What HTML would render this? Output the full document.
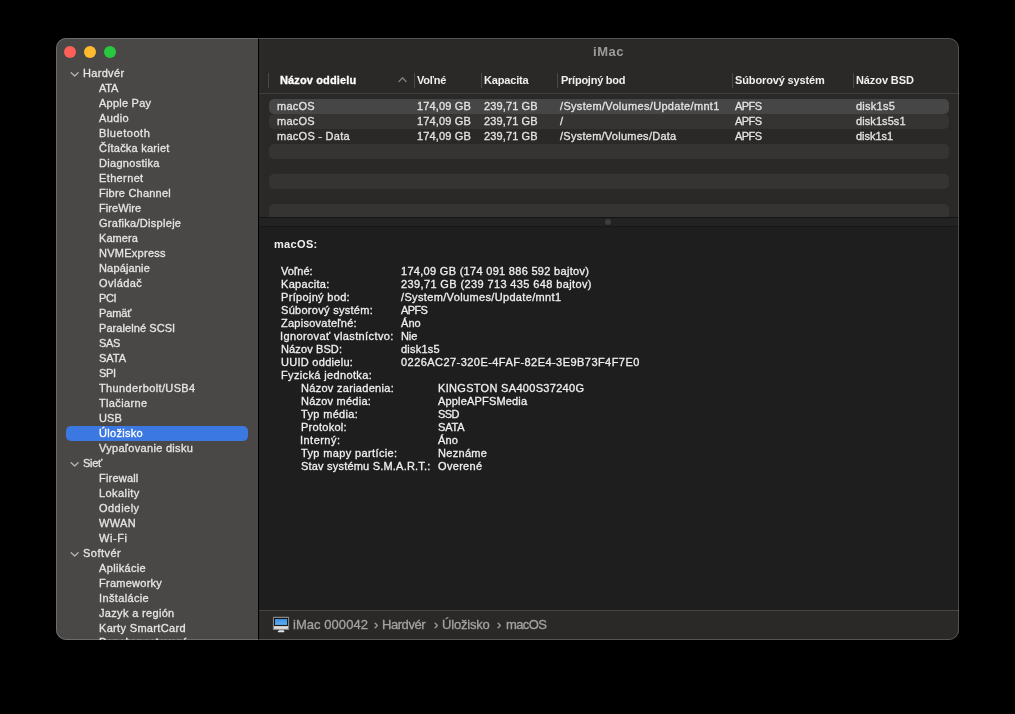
<!DOCTYPE html>
<html><head><meta charset="utf-8"><title>iMac</title>
<style>
html,body{margin:0;padding:0;background:#000;}
body{width:1015px;height:714px;overflow:hidden;position:relative;font-family:"Liberation Sans",sans-serif;}
#win{position:absolute;left:56px;top:38px;width:903px;height:602px;border-radius:10px;overflow:hidden;background:#2a2928;}
#ring{position:absolute;left:56px;top:38px;width:903px;height:602px;border-radius:10px;box-sizing:border-box;border:1px solid rgba(255,255,255,0.2);pointer-events:none;}
#side{position:absolute;left:0;top:0;width:202px;height:602px;background:#4a4847;}
#sepv{position:absolute;left:202px;top:0;width:1px;height:602px;background:#000;}
.tl{position:absolute;top:8px;width:12px;height:12px;border-radius:50%;}
#txt{position:absolute;left:0;top:0;width:903px;height:602px;will-change:transform;}
.t{position:absolute;white-space:nowrap;-webkit-text-stroke:0 currentColor;}
.sel{position:absolute;left:10px;width:182px;height:15px;border-radius:5px;background:#3b78e2;}
.vsep{position:absolute;top:35px;width:1px;height:15px;background:#4a4948;}
#hline{position:absolute;left:203px;right:0;top:55px;height:1px;background:#403f3e;}
.rb{position:absolute;left:213px;width:680px;height:15px;border-radius:5px;}
.rsel{background:#464646;}
.ralt{background:#353432;}
#split{position:absolute;left:203px;right:0;top:179px;height:10px;background:#222222;border-top:1px solid #151515;border-bottom:1px solid #171717;box-sizing:border-box;}
#dot{position:absolute;left:549px;top:181px;width:6px;height:6px;border-radius:50%;background:#3c3c3c;}
#detail{position:absolute;left:203px;right:0;top:189px;height:384px;background:#1e1e1e;}
#pline{position:absolute;left:203px;right:0;top:572px;height:1px;background:#474645;}
#pbar{position:absolute;left:203px;right:0;top:573px;height:29px;background:#2a2928;}
</style></head><body>
<div id="win">
 <div id="side">
  <div class="tl" style="left:8px;background:#fe5f57"></div>
  <div class="tl" style="left:28px;background:#febc2e"></div>
  <div class="tl" style="left:48px;background:#28c840"></div>
 </div>
 <div id="sepv"></div>
 <div class="vsep" style="left:212px"></div><div class="vsep" style="left:358px"></div><div class="vsep" style="left:425px"></div><div class="vsep" style="left:501px"></div><div class="vsep" style="left:676px"></div><div class="vsep" style="left:797px"></div>
 <svg style="position:absolute;left:342px;top:38px" width="9" height="7" viewBox="0 0 9 7"><path d="M1 5.5 L4.5 1.8 L8 5.5" fill="none" stroke="#807f7e" stroke-width="1.3" stroke-linecap="round" stroke-linejoin="round"/></svg>
 <div id="hline"></div>
 <div class="rb rsel" style="top:61px"></div><div class="rb ralt" style="top:76px"></div><div class="rb ralt" style="top:106px"></div><div class="rb ralt" style="top:136px"></div><div class="rb ralt" style="top:166px"></div>
 <div id="split"></div><div id="dot"></div>
 <div id="detail"></div>
 <div id="pline"></div>
 <div id="pbar"></div>
 <svg style="position:absolute;left:216px;top:578px" width="18" height="18" viewBox="0 0 18 18">
  <defs><linearGradient id="scr" x1="0" y1="0" x2="0" y2="1"><stop offset="0" stop-color="#3f8ed8"/><stop offset="1" stop-color="#5cb2f6"/></linearGradient></defs>
  <rect x="0.9" y="0.8" width="16.2" height="13.2" rx="0.6" fill="#878685"/>
  <rect x="2" y="2" width="14" height="7.8" fill="#070605"/>
  <rect x="2.9" y="2.9" width="12.3" height="6" fill="url(#scr)"/>
  <rect x="2" y="10.2" width="14" height="2.7" fill="#dcdcdc"/>
  <path d="M7.3 13.6 h4.1 l0.7 1.4 h-5.5 z" fill="#a8a8a8"/>
  <rect x="5.8" y="14.8" width="6.6" height="1.5" rx="0.7" fill="#e2e2e2"/>
 </svg>
 <svg style="position:absolute;left:14px;top:33px" width="10" height="7" viewBox="0 0 10 7"><path d="M1.2 1.7 L4.65 5.0 L8.1 1.7" fill="none" stroke="#b3b2b1" stroke-width="1.4" stroke-linecap="round" stroke-linejoin="round"/></svg><div class="sel" style="top:388px"></div><svg style="position:absolute;left:14px;top:423px" width="10" height="7" viewBox="0 0 10 7"><path d="M1.2 1.7 L4.65 5.0 L8.1 1.7" fill="none" stroke="#b3b2b1" stroke-width="1.4" stroke-linecap="round" stroke-linejoin="round"/></svg><svg style="position:absolute;left:14px;top:513px" width="10" height="7" viewBox="0 0 10 7"><path d="M1.2 1.7 L4.65 5.0 L8.1 1.7" fill="none" stroke="#b3b2b1" stroke-width="1.4" stroke-linecap="round" stroke-linejoin="round"/></svg>
 <div id="txt"><div class="t" style="-webkit-text-stroke-width:0.3px;left:27px;top:28px;height:15px;line-height:15px;font-size:11px;font-weight:normal;color:#e6e5e4;letter-spacing:0.32px;">Hardvér</div>
<div class="t" style="-webkit-text-stroke-width:0.3px;left:43px;top:43px;height:15px;line-height:15px;font-size:11px;font-weight:normal;color:#e6e5e4;letter-spacing:-0.20px;">ATA</div>
<div class="t" style="-webkit-text-stroke-width:0.3px;left:43px;top:58px;height:15px;line-height:15px;font-size:11px;font-weight:normal;color:#e6e5e4;letter-spacing:0.23px;">Apple Pay</div>
<div class="t" style="-webkit-text-stroke-width:0.3px;left:43px;top:73px;height:15px;line-height:15px;font-size:11px;font-weight:normal;color:#e6e5e4;letter-spacing:0.38px;">Audio</div>
<div class="t" style="-webkit-text-stroke-width:0.3px;left:43px;top:88px;height:15px;line-height:15px;font-size:11px;font-weight:normal;color:#e6e5e4;letter-spacing:0.54px;">Bluetooth</div>
<div class="t" style="-webkit-text-stroke-width:0.3px;left:43px;top:103px;height:15px;line-height:15px;font-size:11px;font-weight:normal;color:#e6e5e4;letter-spacing:0.24px;">Čítačka kariet</div>
<div class="t" style="-webkit-text-stroke-width:0.3px;left:43px;top:118px;height:15px;line-height:15px;font-size:11px;font-weight:normal;color:#e6e5e4;letter-spacing:0.30px;">Diagnostika</div>
<div class="t" style="-webkit-text-stroke-width:0.3px;left:43px;top:133px;height:15px;line-height:15px;font-size:11px;font-weight:normal;color:#e6e5e4;letter-spacing:0.37px;">Ethernet</div>
<div class="t" style="-webkit-text-stroke-width:0.3px;left:43px;top:148px;height:15px;line-height:15px;font-size:11px;font-weight:normal;color:#e6e5e4;letter-spacing:0.22px;">Fibre Channel</div>
<div class="t" style="-webkit-text-stroke-width:0.3px;left:43px;top:163px;height:15px;line-height:15px;font-size:11px;font-weight:normal;color:#e6e5e4;letter-spacing:0.07px;">FireWire</div>
<div class="t" style="-webkit-text-stroke-width:0.3px;left:43px;top:178px;height:15px;line-height:15px;font-size:11px;font-weight:normal;color:#e6e5e4;letter-spacing:0.29px;">Grafika/Displeje</div>
<div class="t" style="-webkit-text-stroke-width:0.3px;left:43px;top:193px;height:15px;line-height:15px;font-size:11px;font-weight:normal;color:#e6e5e4;letter-spacing:0.08px;">Kamera</div>
<div class="t" style="-webkit-text-stroke-width:0.3px;left:43px;top:208px;height:15px;line-height:15px;font-size:11px;font-weight:normal;color:#e6e5e4;letter-spacing:0.26px;">NVMExpress</div>
<div class="t" style="-webkit-text-stroke-width:0.3px;left:43px;top:223px;height:15px;line-height:15px;font-size:11px;font-weight:normal;color:#e6e5e4;letter-spacing:0.16px;">Napájanie</div>
<div class="t" style="-webkit-text-stroke-width:0.3px;left:43px;top:238px;height:15px;line-height:15px;font-size:11px;font-weight:normal;color:#e6e5e4;letter-spacing:0.42px;">Ovládač</div>
<div class="t" style="-webkit-text-stroke-width:0.3px;left:43px;top:253px;height:15px;line-height:15px;font-size:11px;font-weight:normal;color:#e6e5e4;letter-spacing:-0.35px;">PCI</div>
<div class="t" style="-webkit-text-stroke-width:0.3px;left:43px;top:268px;height:15px;line-height:15px;font-size:11px;font-weight:normal;color:#e6e5e4;letter-spacing:-0.15px;">Pamäť</div>
<div class="t" style="-webkit-text-stroke-width:0.3px;left:43px;top:283px;height:15px;line-height:15px;font-size:11px;font-weight:normal;color:#e6e5e4;letter-spacing:0.07px;">Paralelné SCSI</div>
<div class="t" style="-webkit-text-stroke-width:0.3px;left:43px;top:298px;height:15px;line-height:15px;font-size:11px;font-weight:normal;color:#e6e5e4;letter-spacing:-0.35px;">SAS</div>
<div class="t" style="-webkit-text-stroke-width:0.3px;left:43px;top:313px;height:15px;line-height:15px;font-size:11px;font-weight:normal;color:#e6e5e4;letter-spacing:0.00px;">SATA</div>
<div class="t" style="-webkit-text-stroke-width:0.3px;left:43px;top:328px;height:15px;line-height:15px;font-size:11px;font-weight:normal;color:#e6e5e4;letter-spacing:-0.35px;">SPI</div>
<div class="t" style="-webkit-text-stroke-width:0.3px;left:43px;top:343px;height:15px;line-height:15px;font-size:11px;font-weight:normal;color:#e6e5e4;letter-spacing:0.38px;">Thunderbolt/USB4</div>
<div class="t" style="-webkit-text-stroke-width:0.3px;left:43px;top:358px;height:15px;line-height:15px;font-size:11px;font-weight:normal;color:#e6e5e4;letter-spacing:0.35px;">Tlačiarne</div>
<div class="t" style="-webkit-text-stroke-width:0.3px;left:43px;top:373px;height:15px;line-height:15px;font-size:11px;font-weight:normal;color:#e6e5e4;letter-spacing:0.05px;">USB</div>
<div class="t" style="-webkit-text-stroke-width:0.3px;left:43px;top:388px;height:15px;line-height:15px;font-size:11px;font-weight:normal;color:#ffffff;letter-spacing:0.31px;">Úložisko</div>
<div class="t" style="-webkit-text-stroke-width:0.3px;left:43px;top:403px;height:15px;line-height:15px;font-size:11px;font-weight:normal;color:#e6e5e4;letter-spacing:0.30px;">Vypaľovanie disku</div>
<div class="t" style="-webkit-text-stroke-width:0.3px;left:27px;top:418px;height:15px;line-height:15px;font-size:11px;font-weight:normal;color:#e6e5e4;letter-spacing:-0.30px;">Sieť</div>
<div class="t" style="-webkit-text-stroke-width:0.3px;left:43px;top:433px;height:15px;line-height:15px;font-size:11px;font-weight:normal;color:#e6e5e4;letter-spacing:0.20px;">Firewall</div>
<div class="t" style="-webkit-text-stroke-width:0.3px;left:43px;top:448px;height:15px;line-height:15px;font-size:11px;font-weight:normal;color:#e6e5e4;letter-spacing:0.43px;">Lokality</div>
<div class="t" style="-webkit-text-stroke-width:0.3px;left:43px;top:463px;height:15px;line-height:15px;font-size:11px;font-weight:normal;color:#e6e5e4;letter-spacing:0.47px;">Oddiely</div>
<div class="t" style="-webkit-text-stroke-width:0.3px;left:43px;top:478px;height:15px;line-height:15px;font-size:11px;font-weight:normal;color:#e6e5e4;letter-spacing:0.33px;">WWAN</div>
<div class="t" style="-webkit-text-stroke-width:0.3px;left:43px;top:493px;height:15px;line-height:15px;font-size:11px;font-weight:normal;color:#e6e5e4;letter-spacing:0.60px;">Wi-Fi</div>
<div class="t" style="-webkit-text-stroke-width:0.3px;left:27px;top:508px;height:15px;line-height:15px;font-size:11px;font-weight:normal;color:#e6e5e4;letter-spacing:0.48px;">Softvér</div>
<div class="t" style="-webkit-text-stroke-width:0.3px;left:43px;top:523px;height:15px;line-height:15px;font-size:11px;font-weight:normal;color:#e6e5e4;letter-spacing:0.34px;">Aplikácie</div>
<div class="t" style="-webkit-text-stroke-width:0.3px;left:43px;top:538px;height:15px;line-height:15px;font-size:11px;font-weight:normal;color:#e6e5e4;letter-spacing:0.26px;">Frameworky</div>
<div class="t" style="-webkit-text-stroke-width:0.3px;left:43px;top:553px;height:15px;line-height:15px;font-size:11px;font-weight:normal;color:#e6e5e4;letter-spacing:0.36px;">Inštalácie</div>
<div class="t" style="-webkit-text-stroke-width:0.3px;left:43px;top:568px;height:15px;line-height:15px;font-size:11px;font-weight:normal;color:#e6e5e4;letter-spacing:0.33px;">Jazyk a región</div>
<div class="t" style="-webkit-text-stroke-width:0.3px;left:43px;top:583px;height:15px;line-height:15px;font-size:11px;font-weight:normal;color:#e6e5e4;letter-spacing:0.33px;">Karty SmartCard</div>
<div class="t" style="-webkit-text-stroke-width:0.3px;left:43px;top:597px;height:15px;line-height:15px;font-size:11px;font-weight:normal;color:#e6e5e4;letter-spacing:0.20px;">Panely nastavení</div>
<div class="t" style="-webkit-text-stroke-width:0.3px;left:224px;top:34px;height:16px;line-height:16px;font-size:11px;font-weight:bold;color:#ffffff;letter-spacing:0.13px;">Názov oddielu</div>
<div class="t" style="-webkit-text-stroke-width:0px;left:361px;top:34px;height:16px;line-height:16px;font-size:11px;font-weight:bold;color:#f0efee;letter-spacing:-0.25px;">Voľné</div>
<div class="t" style="-webkit-text-stroke-width:0px;left:428px;top:34px;height:16px;line-height:16px;font-size:11px;font-weight:bold;color:#f0efee;letter-spacing:-0.16px;">Kapacita</div>
<div class="t" style="-webkit-text-stroke-width:0px;left:505px;top:34px;height:16px;line-height:16px;font-size:11px;font-weight:bold;color:#f0efee;letter-spacing:-0.25px;">Prípojný bod</div>
<div class="t" style="-webkit-text-stroke-width:0px;left:679px;top:34px;height:16px;line-height:16px;font-size:11px;font-weight:bold;color:#f0efee;letter-spacing:-0.13px;">Súborový systém</div>
<div class="t" style="-webkit-text-stroke-width:0px;left:800px;top:34px;height:16px;line-height:16px;font-size:11px;font-weight:bold;color:#f0efee;letter-spacing:-0.10px;">Názov BSD</div>
<div class="t" style="-webkit-text-stroke-width:0.3px;left:221px;top:61px;height:15px;line-height:15px;font-size:11px;font-weight:normal;color:#e4e3e2;letter-spacing:0.25px;">macOS</div>
<div class="t" style="-webkit-text-stroke-width:0.3px;left:361px;top:61px;height:15px;line-height:15px;font-size:11px;font-weight:normal;color:#e4e3e2;letter-spacing:0.14px;">174,09 GB</div>
<div class="t" style="-webkit-text-stroke-width:0.3px;left:428px;top:61px;height:15px;line-height:15px;font-size:11px;font-weight:normal;color:#e4e3e2;letter-spacing:0.12px;">239,71 GB</div>
<div class="t" style="-webkit-text-stroke-width:0.3px;left:504px;top:61px;height:15px;line-height:15px;font-size:11px;font-weight:normal;color:#e4e3e2;letter-spacing:0.32px;">/System/Volumes/Update/mnt1</div>
<div class="t" style="-webkit-text-stroke-width:0.3px;left:679px;top:61px;height:15px;line-height:15px;font-size:11px;font-weight:normal;color:#e4e3e2;letter-spacing:-0.57px;">APFS</div>
<div class="t" style="-webkit-text-stroke-width:0.3px;left:800px;top:61px;height:15px;line-height:15px;font-size:11px;font-weight:normal;color:#e4e3e2;letter-spacing:0.25px;">disk1s5</div>
<div class="t" style="-webkit-text-stroke-width:0.3px;left:221px;top:76px;height:15px;line-height:15px;font-size:11px;font-weight:normal;color:#e4e3e2;letter-spacing:0.25px;">macOS</div>
<div class="t" style="-webkit-text-stroke-width:0.3px;left:361px;top:76px;height:15px;line-height:15px;font-size:11px;font-weight:normal;color:#e4e3e2;letter-spacing:0.14px;">174,09 GB</div>
<div class="t" style="-webkit-text-stroke-width:0.3px;left:428px;top:76px;height:15px;line-height:15px;font-size:11px;font-weight:normal;color:#e4e3e2;letter-spacing:0.12px;">239,71 GB</div>
<div class="t" style="-webkit-text-stroke-width:0.3px;left:504px;top:76px;height:15px;line-height:15px;font-size:11px;font-weight:normal;color:#e4e3e2;letter-spacing:0.00px;">/</div>
<div class="t" style="-webkit-text-stroke-width:0.3px;left:679px;top:76px;height:15px;line-height:15px;font-size:11px;font-weight:normal;color:#e4e3e2;letter-spacing:-0.57px;">APFS</div>
<div class="t" style="-webkit-text-stroke-width:0.3px;left:800px;top:76px;height:15px;line-height:15px;font-size:11px;font-weight:normal;color:#e4e3e2;letter-spacing:0.08px;">disk1s5s1</div>
<div class="t" style="-webkit-text-stroke-width:0.3px;left:221px;top:91px;height:15px;line-height:15px;font-size:11px;font-weight:normal;color:#e4e3e2;letter-spacing:0.27px;">macOS - Data</div>
<div class="t" style="-webkit-text-stroke-width:0.3px;left:361px;top:91px;height:15px;line-height:15px;font-size:11px;font-weight:normal;color:#e4e3e2;letter-spacing:0.14px;">174,09 GB</div>
<div class="t" style="-webkit-text-stroke-width:0.3px;left:428px;top:91px;height:15px;line-height:15px;font-size:11px;font-weight:normal;color:#e4e3e2;letter-spacing:0.12px;">239,71 GB</div>
<div class="t" style="-webkit-text-stroke-width:0.3px;left:504px;top:91px;height:15px;line-height:15px;font-size:11px;font-weight:normal;color:#e4e3e2;letter-spacing:0.26px;">/System/Volumes/Data</div>
<div class="t" style="-webkit-text-stroke-width:0.3px;left:679px;top:91px;height:15px;line-height:15px;font-size:11px;font-weight:normal;color:#e4e3e2;letter-spacing:-0.57px;">APFS</div>
<div class="t" style="-webkit-text-stroke-width:0.3px;left:800px;top:91px;height:15px;line-height:15px;font-size:11px;font-weight:normal;color:#e4e3e2;letter-spacing:-0.03px;">disk1s1</div>
<div class="t" style="-webkit-text-stroke-width:0px;left:218px;top:199px;height:14px;line-height:14px;font-size:11px;font-weight:bold;color:#f0efee;letter-spacing:0.34px;">macOS:</div>
<div class="t" style="-webkit-text-stroke-width:0.3px;left:225px;top:227px;height:13px;line-height:13px;font-size:11px;font-weight:normal;color:#f0efee;letter-spacing:0.06px;">Voľné:</div>
<div class="t" style="-webkit-text-stroke-width:0.3px;left:345px;top:227px;height:13px;line-height:13px;font-size:11px;font-weight:normal;color:#f0efee;letter-spacing:0.30px;">174,09 GB (174 091 886 592 bajtov)</div>
<div class="t" style="-webkit-text-stroke-width:0.3px;left:225px;top:240px;height:13px;line-height:13px;font-size:11px;font-weight:normal;color:#f0efee;letter-spacing:0.31px;">Kapacita:</div>
<div class="t" style="-webkit-text-stroke-width:0.3px;left:345px;top:240px;height:13px;line-height:13px;font-size:11px;font-weight:normal;color:#f0efee;letter-spacing:0.38px;">239,71 GB (239 713 435 648 bajtov)</div>
<div class="t" style="-webkit-text-stroke-width:0.3px;left:225px;top:253px;height:13px;line-height:13px;font-size:11px;font-weight:normal;color:#f0efee;letter-spacing:0.32px;">Prípojný bod:</div>
<div class="t" style="-webkit-text-stroke-width:0.3px;left:345px;top:253px;height:13px;line-height:13px;font-size:11px;font-weight:normal;color:#f0efee;letter-spacing:0.35px;">/System/Volumes/Update/mnt1</div>
<div class="t" style="-webkit-text-stroke-width:0.3px;left:225px;top:266px;height:13px;line-height:13px;font-size:11px;font-weight:normal;color:#f0efee;letter-spacing:0.29px;">Súborový systém:</div>
<div class="t" style="-webkit-text-stroke-width:0.3px;left:345px;top:266px;height:13px;line-height:13px;font-size:11px;font-weight:normal;color:#f0efee;letter-spacing:-0.60px;">APFS</div>
<div class="t" style="-webkit-text-stroke-width:0.3px;left:225px;top:279px;height:13px;line-height:13px;font-size:11px;font-weight:normal;color:#f0efee;letter-spacing:0.25px;">Zapisovateľné:</div>
<div class="t" style="-webkit-text-stroke-width:0.3px;left:345px;top:279px;height:13px;line-height:13px;font-size:11px;font-weight:normal;color:#f0efee;letter-spacing:0.05px;">Áno</div>
<div class="t" style="-webkit-text-stroke-width:0.3px;left:224px;top:292px;height:13px;line-height:13px;font-size:11px;font-weight:normal;color:#f0efee;letter-spacing:0.40px;">Ignorovať vlastníctvo:</div>
<div class="t" style="-webkit-text-stroke-width:0.3px;left:345px;top:292px;height:13px;line-height:13px;font-size:11px;font-weight:normal;color:#f0efee;letter-spacing:-0.10px;">Nie</div>
<div class="t" style="-webkit-text-stroke-width:0.3px;left:225px;top:305px;height:13px;line-height:13px;font-size:11px;font-weight:normal;color:#f0efee;letter-spacing:0.12px;">Názov BSD:</div>
<div class="t" style="-webkit-text-stroke-width:0.3px;left:345px;top:305px;height:13px;line-height:13px;font-size:11px;font-weight:normal;color:#f0efee;letter-spacing:0.23px;">disk1s5</div>
<div class="t" style="-webkit-text-stroke-width:0.3px;left:225px;top:318px;height:13px;line-height:13px;font-size:11px;font-weight:normal;color:#f0efee;letter-spacing:0.28px;">UUID oddielu:</div>
<div class="t" style="-webkit-text-stroke-width:0.3px;left:345px;top:318px;height:13px;line-height:13px;font-size:11px;font-weight:normal;color:#f0efee;letter-spacing:0.45px;">0226AC27-320E-4FAF-82E4-3E9B73F4F7E0</div>
<div class="t" style="-webkit-text-stroke-width:0.3px;left:225px;top:331px;height:13px;line-height:13px;font-size:11px;font-weight:normal;color:#f0efee;letter-spacing:0.36px;">Fyzická jednotka:</div>
<div class="t" style="-webkit-text-stroke-width:0.3px;left:245px;top:344px;height:13px;line-height:13px;font-size:11px;font-weight:normal;color:#f0efee;letter-spacing:0.29px;">Názov zariadenia:</div>
<div class="t" style="-webkit-text-stroke-width:0.3px;left:382px;top:344px;height:13px;line-height:13px;font-size:11px;font-weight:normal;color:#f0efee;letter-spacing:0.31px;">KINGSTON SA400S37240G</div>
<div class="t" style="-webkit-text-stroke-width:0.3px;left:245px;top:357px;height:13px;line-height:13px;font-size:11px;font-weight:normal;color:#f0efee;letter-spacing:0.23px;">Názov média:</div>
<div class="t" style="-webkit-text-stroke-width:0.3px;left:382px;top:357px;height:13px;line-height:13px;font-size:11px;font-weight:normal;color:#f0efee;letter-spacing:0.17px;">AppleAPFSMedia</div>
<div class="t" style="-webkit-text-stroke-width:0.3px;left:245px;top:370px;height:13px;line-height:13px;font-size:11px;font-weight:normal;color:#f0efee;letter-spacing:0.34px;">Typ média:</div>
<div class="t" style="-webkit-text-stroke-width:0.3px;left:382px;top:370px;height:13px;line-height:13px;font-size:11px;font-weight:normal;color:#f0efee;letter-spacing:-0.60px;">SSD</div>
<div class="t" style="-webkit-text-stroke-width:0.3px;left:245px;top:383px;height:13px;line-height:13px;font-size:11px;font-weight:normal;color:#f0efee;letter-spacing:0.27px;">Protokol:</div>
<div class="t" style="-webkit-text-stroke-width:0.3px;left:382px;top:383px;height:13px;line-height:13px;font-size:11px;font-weight:normal;color:#f0efee;letter-spacing:-0.13px;">SATA</div>
<div class="t" style="-webkit-text-stroke-width:0.3px;left:244px;top:396px;height:13px;line-height:13px;font-size:11px;font-weight:normal;color:#f0efee;letter-spacing:0.47px;">Interný:</div>
<div class="t" style="-webkit-text-stroke-width:0.3px;left:382px;top:396px;height:13px;line-height:13px;font-size:11px;font-weight:normal;color:#f0efee;letter-spacing:0.15px;">Áno</div>
<div class="t" style="-webkit-text-stroke-width:0.3px;left:245px;top:409px;height:13px;line-height:13px;font-size:11px;font-weight:normal;color:#f0efee;letter-spacing:0.37px;">Typ mapy partície:</div>
<div class="t" style="-webkit-text-stroke-width:0.3px;left:382px;top:409px;height:13px;line-height:13px;font-size:11px;font-weight:normal;color:#f0efee;letter-spacing:0.30px;">Neznáme</div>
<div class="t" style="-webkit-text-stroke-width:0.3px;left:245px;top:422px;height:13px;line-height:13px;font-size:11px;font-weight:normal;color:#f0efee;letter-spacing:0.20px;">Stav systému S.M.A.R.T.:</div>
<div class="t" style="-webkit-text-stroke-width:0.3px;left:382px;top:422px;height:13px;line-height:13px;font-size:11px;font-weight:normal;color:#f0efee;letter-spacing:0.32px;">Overené</div>
<div class="t" style="-webkit-text-stroke-width:0px;left:537px;top:6px;height:16px;line-height:16px;font-size:13px;font-weight:bold;color:#9c9b9a;letter-spacing:0.53px;">iMac</div>
<div class="t" style="-webkit-text-stroke-width:0.3px;left:237px;top:579px;height:16px;line-height:16px;font-size:13px;font-weight:normal;color:#a3a2a1;letter-spacing:0.05px;">iMac 000042</div>
<div class="t" style="-webkit-text-stroke-width:0.3px;left:318px;top:579px;height:16px;line-height:16px;font-size:13px;font-weight:normal;color:#a3a2a1;letter-spacing:0.00px;">›</div>
<div class="t" style="-webkit-text-stroke-width:0.3px;left:326px;top:579px;height:16px;line-height:16px;font-size:13px;font-weight:normal;color:#a3a2a1;letter-spacing:-0.45px;">Hardvér</div>
<div class="t" style="-webkit-text-stroke-width:0.3px;left:378px;top:579px;height:16px;line-height:16px;font-size:13px;font-weight:normal;color:#a3a2a1;letter-spacing:0.00px;">›</div>
<div class="t" style="-webkit-text-stroke-width:0.3px;left:386px;top:579px;height:16px;line-height:16px;font-size:13px;font-weight:normal;color:#a3a2a1;letter-spacing:-0.20px;">Úložisko</div>
<div class="t" style="-webkit-text-stroke-width:0.3px;left:441px;top:579px;height:16px;line-height:16px;font-size:13px;font-weight:normal;color:#a3a2a1;letter-spacing:0.00px;">›</div>
<div class="t" style="-webkit-text-stroke-width:0.3px;left:450px;top:579px;height:16px;line-height:16px;font-size:13px;font-weight:normal;color:#a3a2a1;letter-spacing:-0.60px;">macOS</div></div>
</div>
<div id="ring"></div>
</body></html>
